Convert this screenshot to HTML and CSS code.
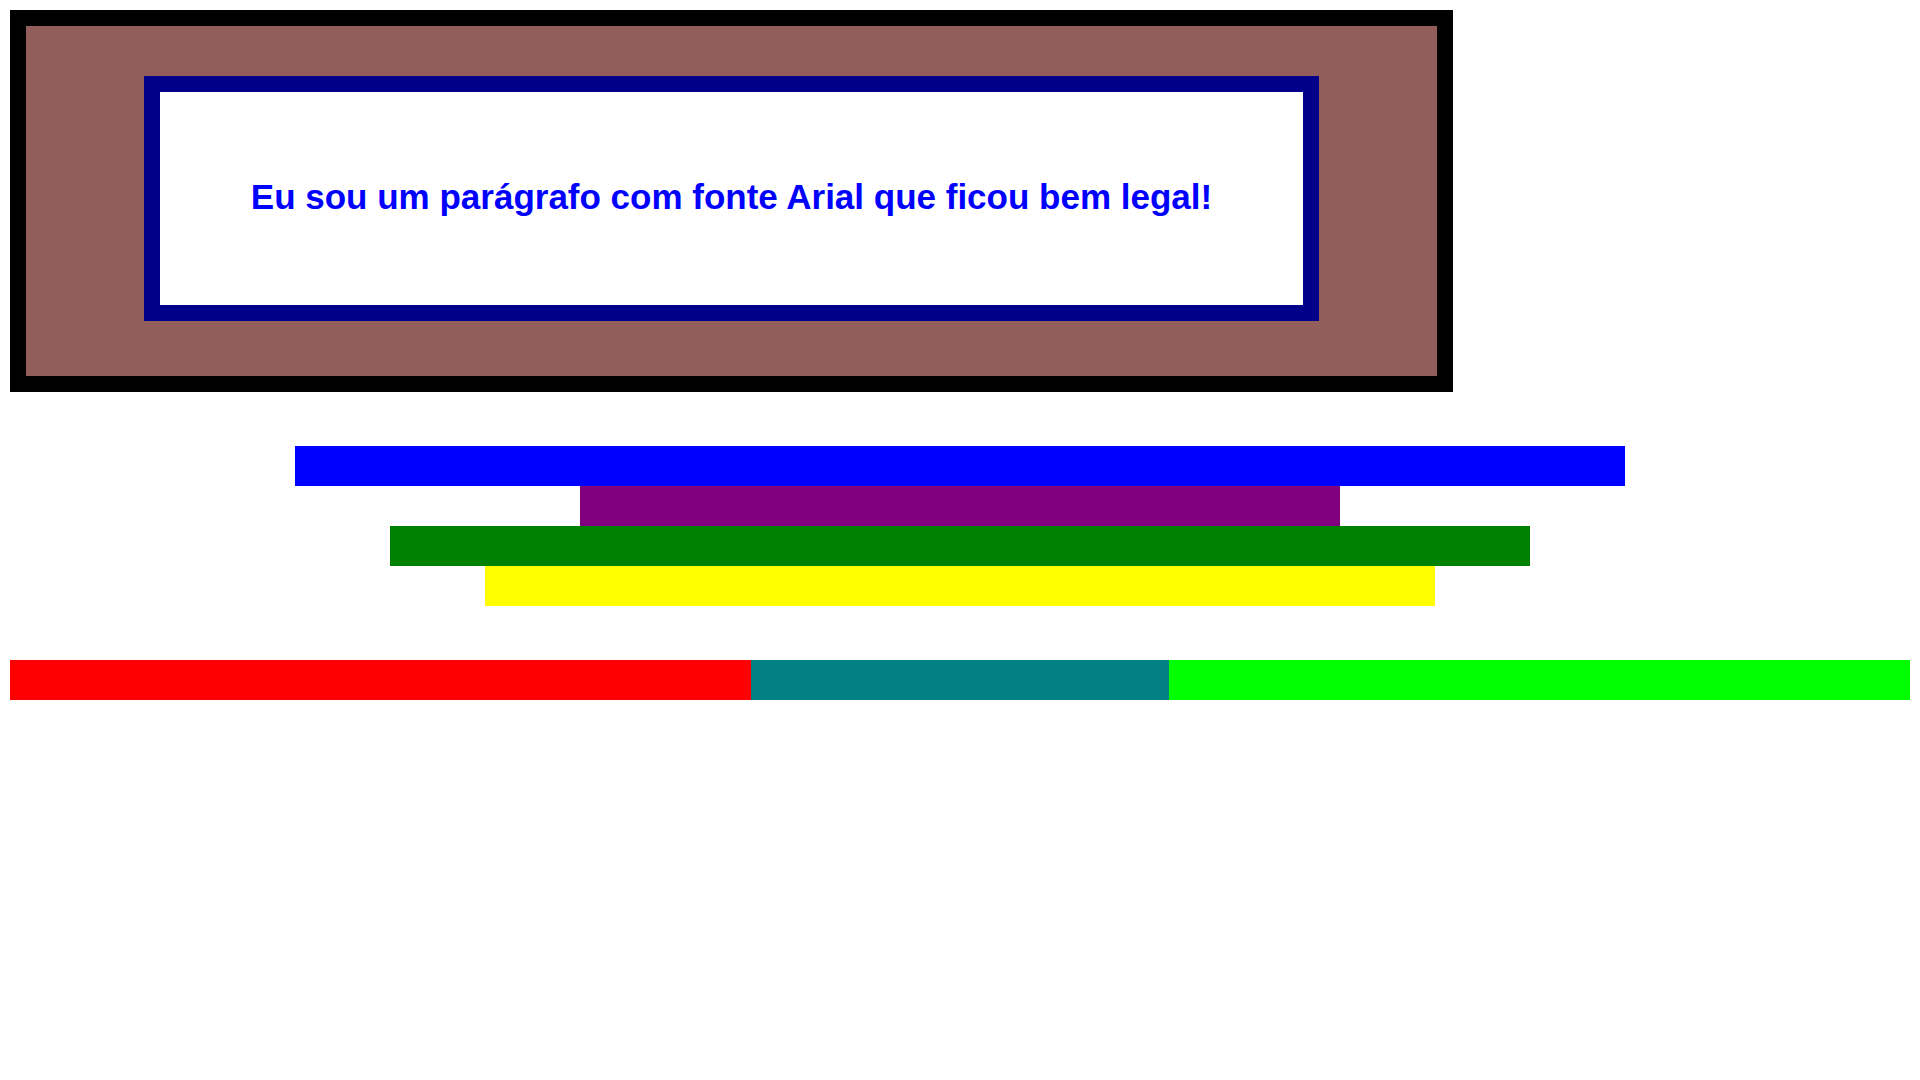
FILE: index.html
```html
<!DOCTYPE html>
<html lang="pt">
<head>
<meta charset="utf-8">
<title>Caixas</title>
<link rel="stylesheet" href="styles.css">
</head>
<body>
<div class="outer">
  <div class="inner">
    <p class="text">Eu sou um parágrafo com fonte Arial que ficou bem legal!</p>
  </div>
</div>
<div class="stack">
  <div class="bar blue"></div>
  <div class="bar purple"></div>
  <div class="bar green"></div>
  <div class="bar yellow"></div>
</div>
<div class="row">
  <div class="seg red"></div>
  <div class="seg teal"></div>
  <div class="seg lime"></div>
</div>
</body>
</html>
```
FILE: styles.css
```css
html, body { background: #fff; }
body { margin: 10px; font-family: "Liberation Sans", Arial, sans-serif; }
.outer {
  width: 1175px;
  border: 16px solid #000;
  background: #925e5c;
  padding: 50px 118px 55px;
  box-sizing: content-box;
}
.inner {
  border: 16px solid #00008b;
  background: #fff;
  height: 213px;
  display: flex;
  align-items: center;
  justify-content: center;
}
.text {
  margin: 0;
  padding-bottom: 3px;
  color: #0000ff;
  font-weight: bold;
  font-size: 35px;
  line-height: 40px;
}
.stack {
  margin-top: 54px;
  display: flex;
  flex-direction: column;
  align-items: center;
}
.bar { height: 40px; }
.blue { width: 70%; background: #0000ff; }
.purple { width: 40%; background: #800080; }
.green { width: 60%; background: #008000; }
.yellow { width: 50%; background: #ffff00; }
.row { margin-top: 54px; display: flex; height: 40px; }
.seg { height: 40px; }
.red { width: 39%; background: #ff0000; }
.teal { width: 22%; background: #008080; }
.lime { width: 39%; background: #00ff00; }
```
